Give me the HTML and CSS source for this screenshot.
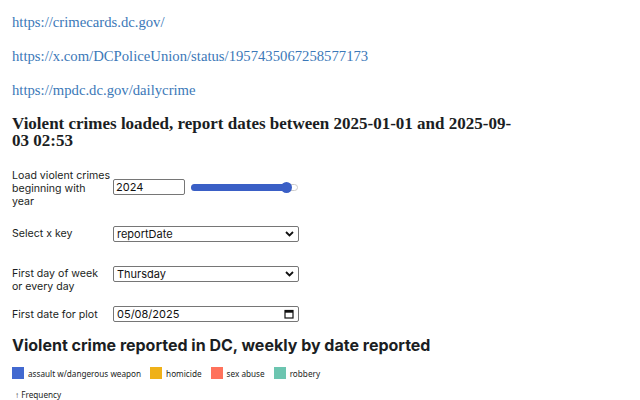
FILE: index.html
```html
<!DOCTYPE html>
<html>
<head>
<meta charset="utf-8">
<link rel="stylesheet" href="styles.css">
</head>
<body>
<main class="page">
  <p class="link-p"><a href="#">https://crimecards.dc.gov/</a></p>
  <p class="link-p"><a href="#">https://x.com/DCPoliceUnion/status/1957435067258577173</a></p>
  <p class="link-p"><a href="#">https://mpdc.dc.gov/dailycrime</a></p>
  <h2 class="title-serif">Violent crimes loaded, report dates between 2025-01-01 and 2025-09-03 02:53</h2>

  <form class="field row1">
    <label class="lbl lbl-first">Load violent crimes<br>beginning with<br>year</label>
    <div class="ctl ctl-range">
      <input class="num" type="text" value="2024">
      <div class="slider"><div class="track"><div class="fill"></div><div class="knob"></div></div></div>
    </div>
  </form>

  <form class="field row2">
    <label class="lbl">Select x key</label>
    <div class="ctl"><div class="sel"><span>reportDate</span><svg class="chev" width="9" height="6" viewBox="0 0 9 6"><path d="M1 1 L4.5 4.5 L8 1" fill="none" stroke="#111" stroke-width="1.8"/></svg></div></div>
  </form>

  <form class="field row3">
    <label class="lbl">First day of week<br>or every day</label>
    <div class="ctl"><div class="sel"><span>Thursday</span><svg class="chev" width="9" height="6" viewBox="0 0 9 6"><path d="M1 1 L4.5 4.5 L8 1" fill="none" stroke="#111" stroke-width="1.8"/></svg></div></div>
  </form>

  <form class="field row4">
    <label class="lbl lbl-pad">First date for plot</label>
    <div class="ctl"><div class="sel"><span>05/08/2025</span><svg class="cal" width="10" height="10" viewBox="0 0 10 10"><rect x="1" y="1.5" width="8" height="7.5" fill="none" stroke="#111" stroke-width="1.2"/><rect x="1" y="1.5" width="8" height="2.2" fill="#111"/></svg></div></div>
  </form>

  <h2 class="title-sans">Violent crime reported in DC, weekly by date reported</h2>
  <div class="legend">
    <span class="item"><i class="sw" style="background:#4269d0"></i>assault w/dangerous weapon</span>
    <span class="item"><i class="sw" style="background:#efb118"></i>homicide</span>
    <span class="item"><i class="sw" style="background:#ff725c"></i>sex abuse</span>
    <span class="item"><i class="sw" style="background:#6cc5b0"></i>robbery</span>
  </div>
  <div class="axis-label">↑ Frequency</div>
</main>
</body>
</html>
```
FILE: styles.css
```css
html, body { margin: 0; padding: 0; background: #fff; overflow: hidden; }
.page { padding: 13px 12px 0 12px; width: 510px; }
.link-p { margin: 0 0 16px 0; font-family: "Liberation Serif", serif; font-size: 14.7px; line-height: 18px; }
.link-p a { color: #3b78b8; text-decoration: none; }
.title-serif { margin: 0 0 17px 0; font-family: "Liberation Serif", serif; font-weight: bold; font-size: 17px; line-height: 17px; color: #1b1e23; }
.field { display: flex; align-items: flex-start; font-family: Inter, "Liberation Sans", sans-serif; font-size: 10.6px; color: #1b1e23; margin: 0; }
.row1 { margin-bottom: 18px; }
.row2 { margin-bottom: 24px; }
.row3 { margin-bottom: 13px; }
.row4 { margin-bottom: 13px; }
.lbl { width: 101px; flex: none; line-height: 13px; padding-top: 1px; white-space: nowrap; }
.lbl-first { padding-top: 3px; }
.lbl-pad { padding-top: 2px; }
.ctl { display: flex; align-items: center; gap: 6px; }
.ctl-range { margin-top: 13px; }
.num { box-sizing: border-box; width: 72px; height: 16px; border: 1px solid #767676; border-radius: 2px; padding: 0 2px; font-family: Inter, "Liberation Sans", sans-serif; font-size: 11px; margin: 0; color: #111; }
.slider { width: 107px; height: 16px; display: flex; align-items: center; }
.track { position: relative; width: 100%; height: 5px; background: #fff; border: 1px solid #ccc; border-radius: 4px; }
.fill { position: absolute; left: -1px; top: -1px; height: 7px; width: 96px; background: #3a5fc6; border-radius: 4px; }
.knob { position: absolute; left: 89px; top: -3px; width: 11px; height: 11px; border-radius: 50%; background: #3a5fc6; }
.sel { height: 14px; border: 1px solid #767676; border-radius: 2px; display: flex; align-items: center; justify-content: space-between; padding: 0 4px 0 3px; width: 177px; color: #111; font-size: 11px; }
.chev { flex: none; }
.title-sans { margin: 0 0 12px 0; font-family: Inter, sans-serif; font-weight: bold; font-size: 16px; line-height: 20px; color: #1b1e23; }
.legend { display: flex; gap: 9px; font-family: "Noto Sans", sans-serif; font-size: 8.2px; color: #1b1e23; align-items: center; height: 12px; }
.item { display: flex; align-items: center; gap: 4px; }
.sw { display: inline-block; width: 12px; height: 12px; }
.axis-label { margin: 10px 0 0 3px; font-family: "Noto Sans", sans-serif; font-size: 8.2px; line-height: 11px; color: #1b1e23; }
```
